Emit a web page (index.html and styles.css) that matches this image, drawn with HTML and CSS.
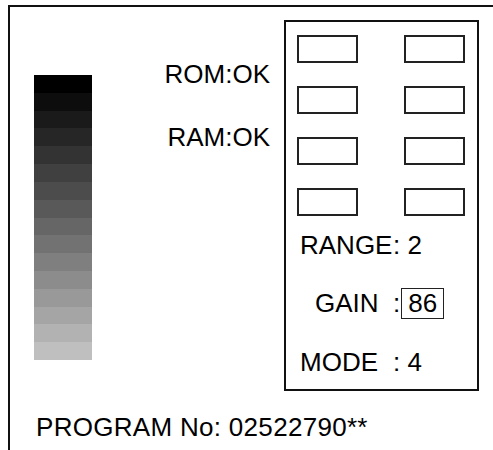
FILE: index.html
```html
<!DOCTYPE html>
<html lang="en">

<head>
    <meta charset="UTF-8">
    <meta name="viewport" content="width=device-width, initial-scale=1.0">
    <title>self test</title>
    <link rel="stylesheet" href="styles.css">
</head>

<body>
    <div class="screen">
        <div class="main">
            <div class="scale">
                <div style="background:#000000"></div>
                <div style="background:#0d0d0d"></div>
                <div style="background:#1a1a1a"></div>
                <div style="background:#262626"></div>
                <div style="background:#333333"></div>
                <div style="background:#404040"></div>
                <div style="background:#4c4c4c"></div>
                <div style="background:#595959"></div>
                <div style="background:#666666"></div>
                <div style="background:#727272"></div>
                <div style="background:#7f7f7f"></div>
                <div style="background:#8c8c8c"></div>
                <div style="background:#999999"></div>
                <div style="background:#a5a5a5"></div>
                <div style="background:#b2b2b2"></div>
                <div style="background:#bfbfbf"></div>
            </div>

            <div class="status">
                <div class="line">ROM:OK</div>
                <div class="line second">RAM:OK</div>
            </div>

            <div class="panel">
                <div class="keys">
                    <div class="key"></div>
                    <div class="key"></div>
                    <div class="key"></div>
                    <div class="key"></div>
                    <div class="key"></div>
                    <div class="key"></div>
                    <div class="key"></div>
                    <div class="key"></div>
                </div>
                <div class="row first"><span class="label">RANGE</span>: 2</div>
                <div class="row"><span class="label indent">GAIN</span>:<span class="value">86</span></div>
                <div class="row"><span class="label">MODE</span>: 4</div>
            </div>
        </div>

        <div class="program">PROGRAM No: 02522790**</div>
    </div>
</body>

</html>
```

FILE: styles.css
```css
html,
body {
    margin: 0;
    overflow: hidden;
    background-color: #ffffff;
}

body {
    font-family: "Liberation Sans", Arial, sans-serif;
    font-size: 26px;
    color: #000000;
}

.screen {
    margin: 5px 0 0 8px;
    border-top: 2px solid #111111;
    border-left: 2px solid #111111;
    height: 460px;
}

.main {
    display: flex;
    align-items: flex-start;
    padding: 13px 0 0 24px;
}

.scale {
    display: flex;
    flex-direction: column;
    width: 58px;
    height: 285px;
    margin-top: 55px;
}

.scale>div {
    flex: 1;
}

.status {
    width: 178px;
    margin-right: 14px;
    text-align: right;
}

.line {
    line-height: 30px;
    margin-top: 39px;
    white-space: nowrap;
}

.line.second {
    margin-top: 33px;
}

.panel {
    box-sizing: border-box;
    width: 195px;
    height: 371px;
    border: 2px solid #111111;
    padding: 13px 0 0 11px;
}

.keys {
    display: grid;
    grid-template-columns: 61px 61px;
    grid-auto-rows: 28px;
    column-gap: 46px;
    row-gap: 23px;
}

.key {
    border: 2px solid #222222;
    box-sizing: border-box;
}

.row {
    display: flex;
    align-items: baseline;
    line-height: 30px;
    margin-top: 28px;
    padding-left: 3px;
    white-space: pre;
}

.row.first {
    margin-top: 14px;
}

.label {
    width: 93px;
}

.label.indent {
    box-sizing: border-box;
    padding-left: 15px;
}

.value {
    display: inline-block;
    line-height: 29px;
    padding: 0 6px;
    margin-left: 1px;
    border: 1px solid #222222;
}

.program {
    line-height: 30px;
    margin-top: 21px;
    padding-left: 26px;
    letter-spacing: 0.3px;
    white-space: nowrap;
}
```
